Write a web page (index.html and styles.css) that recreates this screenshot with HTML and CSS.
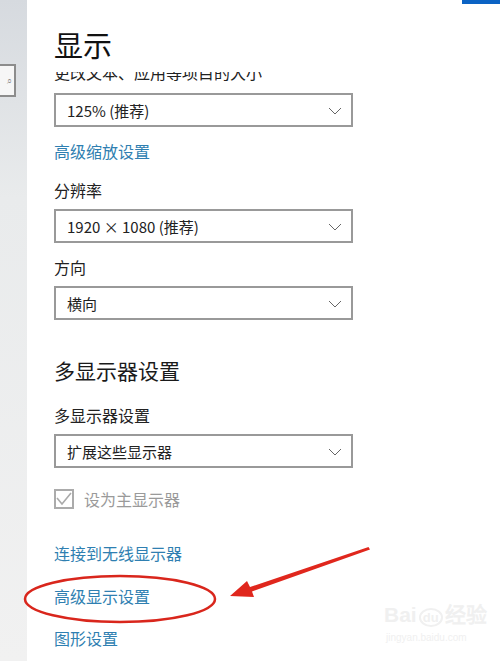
FILE: index.html
```html
<!DOCTYPE html>
<html lang="zh-CN">
<head>
    <meta charset="UTF-8">
    <meta name="viewport" content="width=device-width, initial-scale=1.0">
    <title>显示</title>
    <link rel="stylesheet" href="styles.css">
</head>
<body>

    <!-- Left navigation strip (cut off) -->
    <div class="sidebar">
        <div class="search-box">⌕</div>
    </div>

    <!-- Settings page -->
    <div class="page">
        <div class="accent-bar"></div>

        <h1 class="page-title">显示</h1>
        <div class="clipped">
            <div class="clipped-text">更改文本、应用等项目的大小</div>
        </div>

        <div class="select select-first">
            <span>125% (推荐)</span>
            <svg class="chevron" width="14" height="8" viewBox="0 0 14 8"><path d="M1 1 L7 7 L13 1" fill="none" stroke="#666" stroke-width="1"/></svg>
        </div>
        <a class="link link-scale" href="#">高级缩放设置</a>

        <div class="label label-res">分辨率</div>
        <div class="select">
            <span>1920 × 1080 (推荐)</span>
            <svg class="chevron" width="14" height="8" viewBox="0 0 14 8"><path d="M1 1 L7 7 L13 1" fill="none" stroke="#666" stroke-width="1"/></svg>
        </div>

        <div class="label">方向</div>
        <div class="select">
            <span>横向</span>
            <svg class="chevron" width="14" height="8" viewBox="0 0 14 8"><path d="M1 1 L7 7 L13 1" fill="none" stroke="#666" stroke-width="1"/></svg>
        </div>

        <h2 class="section-title">多显示器设置</h2>
        <div class="label label-multi">多显示器设置</div>
        <div class="select">
            <span>扩展这些显示器</span>
            <svg class="chevron" width="14" height="8" viewBox="0 0 14 8"><path d="M1 1 L7 7 L13 1" fill="none" stroke="#666" stroke-width="1"/></svg>
        </div>

        <div class="check-row">
            <div class="checkbox">
                <svg width="16" height="14" viewBox="0 0 16 14"><path d="M1 6 L6 12 L15 1" fill="none" stroke="#aaa" stroke-width="1.6"/></svg>
            </div>
            <span>设为主显示器</span>
        </div>

        <a class="link link-wireless" href="#">连接到无线显示器</a>
        <a class="link link-advanced" href="#">高级显示设置</a>
        <a class="link link-graphics" href="#">图形设置</a>
    </div>

    <!-- Annotation drawn over the screenshot -->
    <svg class="annotation" width="500" height="661" viewBox="0 0 500 661">
        <ellipse cx="120" cy="599" rx="95" ry="23" fill="none" stroke="#d9261c" stroke-width="2.5"/>
        <polygon points="230,596 254,597 252,591.5 370,549.5 368.5,547 250,587 247,581" fill="#e0271d"/>
    </svg>

    <div class="watermark">
        <div class="wm-logo">Bai<span class="wm-paw">du</span>经验</div>
        <div class="wm-url">jingyan.baidu.com</div>
    </div>

</body>
</html>
```

FILE: styles.css
```css
body {
    margin: 0;
    width: 500px;
    height: 661px;
    overflow: hidden;
    display: flex;
    background-color: #fff;
    font-family: "Noto Sans CJK SC", "Noto Sans", sans-serif;
    color: #1b1b1b;
}

/* Left navigation strip */
.sidebar {
    width: 27px;
    flex-shrink: 0;
    background: linear-gradient(to bottom, #d6dadf 0%, #e9ebec 30%, #f1f1f1 100%);
    padding-top: 64px;
}

.search-box {
    width: 12px;
    height: 29px;
    border: 2px solid #8c8c8c;
    border-left: none;
    background-color: #f6f6f6;
    color: #888;
    font-size: 9px;
    line-height: 29px;
    text-align: right;
    padding-right: 2px;
}

/* Main page */
.page {
    flex: 1;
    padding-left: 27px;
    display: flex;
    flex-direction: column;
    align-items: flex-start;
    position: relative;
}

.accent-bar {
    position: absolute;
    top: 0;
    right: 0;
    width: 38px;
    height: 4px;
    background-color: #0b63c4;
}

.page-title {
    margin: 26px 0 0;
    font-size: 29px;
    font-weight: 400;
    line-height: 36px;
    color: #111;
}

/* Subtitle cut off by the header */
.clipped {
    height: 11px;
    overflow: hidden;
    margin-top: 10px;
}

.clipped-text {
    margin-top: -11px;
    font-size: 16px;
    line-height: 22px;
    color: #222;
}

.select {
    width: 299px;
    height: 34px;
    box-sizing: border-box;
    border: 2px solid #999;
    display: flex;
    align-items: center;
    justify-content: space-between;
    padding: 0 9px 0 11px;
    font-size: 15px;
    color: #222;
    margin-top: 8px;
}

.select-first {
    margin-top: 10px;
}

.chevron {
    margin-top: 1px;
}

.label {
    font-size: 16px;
    line-height: 22px;
    margin-top: 13px;
    color: #222;
}

.label-res {
    margin-top: 17px;
}

.link {
    font-size: 16px;
    line-height: 22px;
    color: #2f7fb1;
    text-decoration: none;
}

.link-scale {
    margin-top: 13px;
}

.section-title {
    margin: 36px 0 0;
    font-size: 21px;
    font-weight: 400;
    line-height: 28px;
    color: #1a1a1a;
}

.label-multi {
    margin-top: 20px;
}

.check-row {
    display: flex;
    align-items: center;
    gap: 10px;
    margin-top: 19px;
    font-size: 16px;
    color: #9a9a9a;
}

.checkbox {
    width: 16px;
    height: 16px;
    border: 2px solid #ababab;
    display: flex;
    align-items: center;
    justify-content: center;
}

.link-wireless {
    margin-top: 31px;
}

.link-advanced {
    margin-top: 21px;
}

.link-graphics {
    margin-top: 20px;
}

/* Annotation overlay */
.annotation {
    position: absolute;
    top: 0;
    left: 0;
    pointer-events: none;
}

.watermark {
    position: absolute;
    left: 384px;
    top: 602px;
    color: #f0f0f0;
    font-family: "Liberation Sans", sans-serif;
}

.wm-logo {
    font-size: 21px;
    font-weight: bold;
    line-height: 26px;
}

.wm-paw {
    font-size: 13px;
    border: 2px solid #f0f0f0;
    border-radius: 50%;
    padding: 0 2px;
    margin: 0 2px;
}

.wm-url {
    font-size: 10px;
    line-height: 14px;
    margin-left: 2px;
}
```
